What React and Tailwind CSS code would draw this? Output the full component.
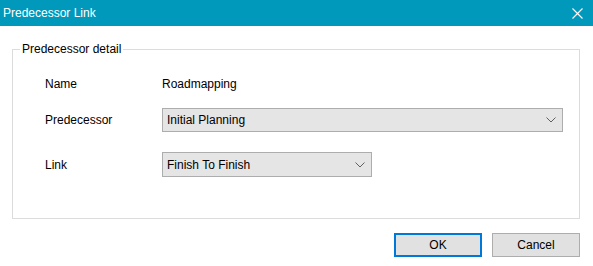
import React from 'react';

const Chevron = () => (
    <svg width="10" height="6" viewBox="0 0 10 6" className="shrink-0">
        <polyline points="0.5,0.5 5,5 9.5,0.5" fill="none" stroke="#606060" strokeWidth="1" />
    </svg>
);

const Combo = ({ value, width }) => (
    <div className={`flex items-center justify-between border border-[#adadad] bg-[#e5e5e5] pl-[4px] pr-[6px] h-full ${width}`}>
        <span>{value}</span>
        <Chevron />
    </div>
);

const App = () => {
    return (
        <div className="w-[593px] h-[266px] bg-white text-[12px] text-black overflow-hidden" style={{ fontFamily: '"Liberation Sans", Arial, sans-serif' }}>
            {/* Title bar */}
            <div className="h-[26px] bg-[#0099bc] flex items-center justify-between pl-[3px] pr-[10px] text-white">
                <span>Predecessor Link</span>
                <svg width="11" height="11" viewBox="0 0 11 11">
                    <path d="M0.5 0.5 L10.5 10.5 M10.5 0.5 L0.5 10.5" stroke="#ffffff" strokeWidth="1.1" />
                </svg>
            </div>

            {/* Group box */}
            <fieldset className="ml-[12px] mt-[16px] w-[568px] border border-[#dcdcdc] pb-[41px]">
                <legend className="ml-[7px] px-[2px] leading-[14px]">Predecessor detail</legend>
                <div className="pt-[16px] pl-[32px]">
                    <div className="flex items-center h-6">
                        <span className="w-[117px]">Name</span>
                        <span>Roadmapping</span>
                    </div>
                    <div className="flex items-center h-6 mt-[12px]">
                        <span className="w-[117px]">Predecessor</span>
                        <Combo value="Initial Planning" width="w-[401px]" />
                    </div>
                    <div className="flex items-center h-[25px] mt-[20px]">
                        <span className="w-[117px]">Link</span>
                        <Combo value="Finish To Finish" width="w-[210px]" />
                    </div>
                </div>
            </fieldset>

            {/* Buttons */}
            <div className="flex justify-end gap-[10px] mt-[14px] pr-[13px]">
                <button className="w-[88px] h-[24px] bg-[#e1e1e1] border border-[#0078d7] shadow-[inset_0_0_0_1px_#0078d7]">OK</button>
                <button className="w-[88px] h-[24px] bg-[#e1e1e1] border border-[#adadad]">Cancel</button>
            </div>
        </div>
    );
};

export default App;
